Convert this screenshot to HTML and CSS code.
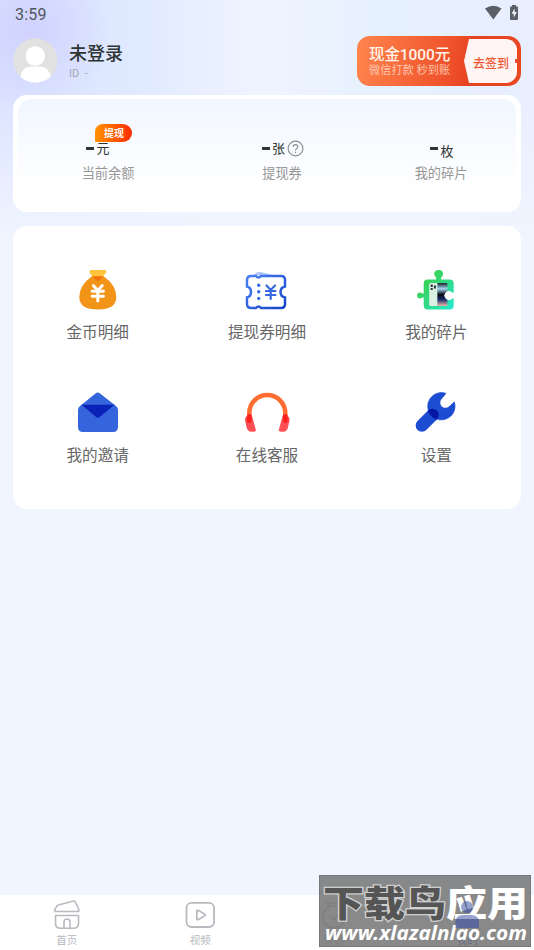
FILE: index.html
```html
<!DOCTYPE html>
<html lang="zh-CN">
<head>
<meta charset="utf-8">
<title>我的</title>
<link rel="stylesheet" href="styles.css">
</head>
<body>
<div class="screen">
  <div class="status">
    <span class="time">3:59</span>
    <svg class="status-icons" width="36" height="18" viewBox="484 4 36 18">
      <path d="M485 8.500Q493.300 2.800 501.500 8.500L493.300 19.500Z" fill="#5b5f66"/>
      <path d="M512 5h4v1.500h1.200q.8 0 .8.800V19q0 .9-.9.900h-6.200q-.9 0-.9-.9V7.300q0-.8.800-.8H512Z" fill="#5b5f66"/>
      <path d="M514.700 8.500l-3.200 5.200h2.200v3.800l3.200-5.600h-2.200Z" fill="#eef3ff"/>
    </svg>
  </div>
  <header class="header">
    <svg class="avatar" width="45" height="45" viewBox="0 0 45 45">
      <defs><clipPath id="round"><circle cx="22.500" cy="22.500" r="22.200"/></clipPath></defs>
      <g clip-path="url(#round)">
        <circle cx="22.500" cy="22.500" r="22.500" fill="#e1e1e1"/>
        <circle cx="22.300" cy="18" r="9.800" fill="#fff"/>
        <path d="M7 40Q8.500 28.500 18 28.500H27Q36 28.500 38.500 40V46H7Z" fill="#fff"/>
      </g>
    </svg>
    <div class="user">
      <div class="name">未登录</div>
      <div class="uid">ID&nbsp; -</div>
    </div>
    <div class="promo">
      <div class="promo-copy">
        <div class="promo-title">现金1000元</div>
        <div class="promo-sub">微信打款 秒到账</div>
      </div>
      <div class="promo-btn"><span>去签到</span></div>
    </div>
  </header>

  <section class="card balance">
    <div class="stat">
      <div class="value"><i class="dash"></i><span>元</span><b class="tag">提现</b></div>
      <div class="stat-label">当前余额</div>
    </div>
    <div class="stat">
      <div class="value"><i class="dash"></i><span>张</span>
        <svg class="help" width="17" height="17" viewBox="0 0 17 17" fill="none" stroke="#8b8b8b" stroke-width="1.100"><circle cx="8.500" cy="8.500" r="7.400"/><path d="M6.200 7Q6.200 4.600 8.500 4.600T10.800 6.800Q10.800 8 9.500 8.800Q8.500 9.400 8.500 10.500M8.500 11.700V13"/></svg>
      </div>
      <div class="stat-label">提现券</div>
    </div>
    <div class="stat">
      <div class="value low"><i class="dash"></i><span>枚</span></div>
      <div class="stat-label">我的碎片</div>
    </div>
  </section>

  <section class="card menu">
    <div class="item">
      <svg width="50" height="50" viewBox="72.700 265 50 50">
        <path d="M92 276Q79 285 79 297Q79 309.500 97.500 309.500T116 297Q116 285 103 276Z" fill="#f29418"/>
        <path d="M91 270H104.500Q107 270.500 105.500 273L102.500 276.500H92.500L89.500 273Q88 270.500 91 270Z" fill="#ffc43b"/>
        <path d="M92 276.300H103L98.700 280.500Q97.500 281.400 96.300 280.500Z" fill="#f4720c"/>
        <path d="M93 285.500L97.500 290.500L102 285.500M97.500 290.500V301M91.800 291.300H103.200M91.800 296.300H103.200" fill="none" stroke="#fff" stroke-width="2.900" stroke-linecap="round"/>
      </svg>
      <span>金币明细</span>
    </div>
    <div class="item">
      <svg width="50" height="50" viewBox="242 265 50 50">
        <defs><linearGradient id="ticket" x1="0" y1="0" x2="1" y2="1"><stop stop-color="#4a80f5"/><stop offset="1" stop-color="#1546c8"/></linearGradient></defs>
        <path d="M254 275Q257 271 261 272L277 276Z" fill="#afc5fa"/>
        <path d="M251.500 276H256Q258.500 279 261 276H281Q285 276 285 280V286.500Q280.500 287.500 280.500 292T285 297.500V304Q285 308 281 308H261Q258.500 305 256 308H251.500Q247 308 247 304V297.500Q251 296.500 251 292T247 286.500V280Q247 276 251.500 276Z" fill="#fff" stroke="url(#ticket)" stroke-width="2.500"/>
        <g fill="#3669e5"><circle cx="258.700" cy="285.200" r="1.700"/><circle cx="258.700" cy="291.800" r="1.700"/><circle cx="258.700" cy="298.400" r="1.700"/></g>
        <path d="M266.500 285.500L270.700 290L275 285.500M270.700 290V299M266 291H275.500M266 295H275.500" fill="none" stroke="#3868df" stroke-width="2.200" stroke-linecap="round"/>
      </svg>
      <span>提现券明细</span>
    </div>
    <div class="item">
      <svg width="50" height="50" viewBox="411.300 265 50 50">
        <defs><linearGradient id="puzzle" x1="0" y1="0" x2="1" y2="1"><stop offset=".3" stop-color="#36d35b"/><stop offset="1" stop-color="#25e8cf"/></linearGradient>
        <linearGradient id="phone" x1="0" y1="0" x2="0" y2="1"><stop stop-color="#18232c"/><stop offset=".25" stop-color="#a5d8f4"/><stop offset=".5" stop-color="#080b13"/><stop offset=".72" stop-color="#182b69"/><stop offset="1" stop-color="#f2b8aa"/></linearGradient></defs>
        <path d="M428 279.500H436.500V277.500Q434.500 276 434.500 273.800Q434.700 270 439 270T443.400 273.800Q443.400 276 441.500 277.500V279.500H450Q454 279.500 454 283.500V305Q454 309.500 450 309.500H428Q424 309.500 424 305V297.500H422.500Q421.500 298.600 420 298.600Q417.500 298.500 417.500 295.500T420 292.500Q421.500 292.500 422.500 293.500H424V283.500Q424 279.500 428 279.500Z" fill="url(#puzzle)"/>
        <rect x="429.500" y="283" width="8.500" height="23" rx="1.500" fill="#dcefe3"/>
        <path d="M431 284.500H433V287H431ZM434.200 285.500H436.200V288.500H434.200ZM431 288H433V290H431Z" fill="#233239"/>
        <rect x="437.700" y="283" width="10" height="23" rx="1" fill="url(#phone)"/>
        <path d="M454.500 292.500H452.500A4.300 4.300 0 0 0 445.300 293.500Q443.600 295.300 445.300 297.500A4.300 4.300 0 0 0 452.500 298.500H454.500Z" fill="#fff"/>
      </svg>
      <span>我的碎片</span>
    </div>
    <div class="item">
      <svg width="50" height="50" viewBox="73 387 50 50">
        <path d="M80 406L95.500 393.500Q97.700 391.500 100 393.500L116 406Q118 407.500 118 410V427Q118 432 113 432H83Q78 432 78 427V410Q78 407.500 80 406Z" fill="#3565dd"/>
        <path d="M81.500 404.800H114.500L100 416.800Q97.900 418.500 95.800 416.800Z" fill="#0b22b9"/>
      </svg>
      <span>我的邀请</span>
    </div>
    <div class="item">
      <svg width="50" height="50" viewBox="242 387 50 50">
        <path d="M249.300 421V413A18 18 0 0 1 285.300 413V421" fill="none" stroke="#ff6e30" stroke-width="4.600" stroke-linecap="round"/>
        <path d="M247 415.500Q250.500 412 252 416L256 430.500Q255.500 431.800 251.500 431.800Q247.500 431.800 246.500 427L245.200 421Q244.500 418 247 415.500ZM287.600 415.500Q284.100 412 282.600 416L278.600 430.500Q279.100 431.800 283.100 431.800Q287.100 431.800 288.100 427L289.400 421Q290.100 418 287.600 415.500Z" fill="#ff4f54"/>
        <path d="M247 415.500Q250 412.500 251.600 415.500V421Q251 423 249 423T247 421ZM287.600 415.500Q284.600 412.500 283 415.500V421Q283.500 423 285.500 423T287.600 421Z" fill="#ff201b"/>
      </svg>
      <span>在线客服</span>
    </div>
    <div class="item">
      <svg width="50" height="50" viewBox="411.600 386.500 50 50">
        <defs><clipPath id="head"><circle cx="441.800" cy="406" r="13.800"/></clipPath></defs>
        <path d="M446.500 392.900A13.600 13.600 0 1 0 454.900 401.500L450 406A5.400 5.400 0 0 1 442 398.300Z" fill="#1c4cd2" stroke="#1c4cd2" stroke-width=".8" stroke-linejoin="round"/>
        <path d="M433 414.500L422.500 425" stroke="#1c4cd2" stroke-width="12.500" stroke-linecap="round"/>
        <path d="M433 414.500L422.500 425" stroke="#0617a3" stroke-width="12.500" stroke-linecap="round" clip-path="url(#head)"/>
      </svg>
      <span>设置</span>
    </div>
  </section>

  <nav class="tabs">
    <div class="tab">
      <svg width="34" height="34" viewBox="50 898 34 34" fill="none" stroke="#b9b9c0" stroke-width="1.600" stroke-linejoin="round">
        <path d="M58.500 905L73.500 901Q74.800 900.700 75.300 902L78.800 909.500Q79.500 911.500 77.500 911.500H56Q54 911.500 54.800 909.500L57 906Q57.500 905.200 58.500 905ZM55.500 915.500H78.500V923.500Q78.500 928.200 73.500 928.200H60.500Q55.500 928.200 55.500 923.500ZM64 928V922Q64 919 67 919T70 922V928"/>
      </svg>
      <span>首页</span>
    </div>
    <div class="tab">
      <svg width="34" height="34" viewBox="183.500 898 34 34" fill="none" stroke="#b9b9c0" stroke-width="1.800" stroke-linejoin="round">
        <rect x="187" y="902.800" width="27.500" height="24.200" rx="5"/>
        <path d="M197.300 911.500Q197.300 909.800 199 910.500L205 914Q206.500 915 205 916L199 919.500Q197.300 920.200 197.300 918.500Z"/>
      </svg>
      <span>视频</span>
    </div>
    <div class="tab">
      <svg width="34" height="34" viewBox="317 898 34 34" fill="none" stroke="#b9b9c0" stroke-width="1.700"><circle cx="334" cy="917" r="11"/><path d="M329 906L327 903H341L339 906M330 916L334 920L339 914"/></svg>
      <span>赚钱</span>
    </div>
    <div class="tab active">
      <svg width="34" height="34" viewBox="450 898 34 34" fill="#1d46cf"><circle cx="467" cy="907" r="6"/><path d="M455.500 928V922Q456 915 463 915H471Q478.500 915 479 922V928Z"/></svg>
      <span>我的</span>
    </div>
  </nav>

  <div class="watermark">
    <svg width="212" height="72" viewBox="319 875 212 72">
      <g class="wm-title">
        <text class="wm-dark" x="323" y="917" textLength="123" lengthAdjust="spacingAndGlyphs">下载鸟</text>
        <text class="wm-light" x="446" y="917" textLength="82" lengthAdjust="spacingAndGlyphs">应用</text>
      </g>
      <text class="wm-url" x="325" y="939.500" textLength="202" lengthAdjust="spacingAndGlyphs">www.xlazalnlao.com</text>
      <g class="wm-tint">
        <circle cx="467" cy="907" r="6"/><path d="M455.500 928V922Q456 915 463 915H471Q478.500 915 479 922V928Z"/>
      </g>
    </svg>
  </div>
</div>
</body>
</html>
```
FILE: styles.css
```css
* { box-sizing: border-box; }
body {
  margin: 0;
  font-family: Roboto, "Noto Sans CJK SC", sans-serif;
  color: #2d3432;
}
.screen {
  position: relative;
  display: flex;
  flex-direction: column;
  width: 534px;
  height: 950px;
  overflow: hidden;
  background:
    radial-gradient(ellipse 80px 85px at 30px 30px, rgba(208, 209, 255, .9) 0%, rgba(208, 210, 255, .5) 50%, rgba(208, 210, 255, 0) 100%),
    linear-gradient(180deg, rgba(241, 245, 255, 0) 90px, #f1f5ff 240px),
    linear-gradient(90deg, #dae2ff 0, #dfe9ff 130px, #eff4ff 260px, #e6f1fe 380px, #e8eefe 534px);
}
.status {
  display: flex;
  justify-content: space-between;
  align-items: center;
  height: 28px;
  padding: 0 14px 2px 15px;
}
.time { font-size: 16px; line-height: 20px; color: #50545f; letter-spacing: .2px; padding-top: 3px; }
.header {
  display: flex;
  height: 67px;
  padding: 8px 13px 0;
}
.avatar { margin-top: 2px; flex: none; }
.user { flex: 1; margin-left: 11px; }
.name { font-size: 18px; font-weight: 500; line-height: 24px; margin-top: 6px; }
.uid { font-size: 11px; line-height: 13px; color: #a3a7b1; margin-top: 1px; }
.promo {
  display: flex;
  width: 164px;
  height: 50px;
  padding: 3px 4px 4px 12px;
  border-radius: 13px;
  background: linear-gradient(100deg, #ff854d, #ee5029 58%, #e5421f 70%, #ea4723);
}
.promo-copy { width: 95px; white-space: nowrap; }
.promo-title { font-size: 15.500px; font-weight: 500; line-height: 20px; margin-top: 6px; color: #fff3ea; letter-spacing: -.1px; }
.promo-sub { font-size: 11.200px; line-height: 14px; margin-top: -1px; color: #ffc5ad; }
.promo-btn {
  width: 53px;
  height: 44px;
  padding: 17px 0 0 9px;
  color: #ed5833;
  font-size: 12px;
  font-weight: 500;
  line-height: 16px;
  white-space: nowrap;
  background: radial-gradient(circle at 53px 22px, #ea4723 2px, #fff5f4 2.500px);
  border-radius: 0 11px 11px 0;
  clip-path: polygon(5px 0, 100% 0, 100% 100%, 5px 100%, 0 50%);
}
.card { margin: 0 13px; background: #fff; border-radius: 14px; flex: none; }
.balance {
  position: relative;
  display: grid;
  grid-template-columns: 190px 158px 160px;
  height: 117px;
  padding-top: 41px;
  isolation: isolate;
}
.balance::before {
  content: "";
  position: absolute;
  z-index: -1;
  inset: 4px 5px;
  border-radius: 14px;
  background: linear-gradient(180deg, #f1f6ff, #fff 82%);
}
.stat { display: flex; flex-direction: column; align-items: center; }
.value { position: relative; display: flex; align-items: center; left: 1px; height: 26px; font-size: 13px; line-height: 20px; }
.value span { margin-left: 2px; }
.value.low span { padding-top: 5px; }
.dash { width: 8px; height: 3px; margin-top: -1px; background: #2d3432; }
.stat:first-child .value { left: -10px; }
.help { margin: -2px 0 0 2px; }
.tag {
  position: absolute;
  left: 9px;
  top: -12px;
  width: 37px;
  height: 18px;
  border-radius: 8px 9px 9px 1px;
  background: linear-gradient(90deg, #ff9200, #ff2b00);
  color: #fff;
  font-size: 10px;
  line-height: 19px;
  font-weight: 700;
  text-align: center;
}
.stat-label { font-size: 13.200px; line-height: 20px; margin-top: 2px; color: #979797; }
.menu {
  display: grid;
  grid-template-columns: repeat(3, 1fr);
  grid-auto-rows: 122px;
  height: 283px;
  margin-top: 14px;
  padding-top: 39px;
}
.item { display: flex; flex-direction: column; align-items: center; }
.item svg { display: block; flex: none; }
.item span { font-size: 15.600px; line-height: 24px; margin-top: 6px; color: #666; }
.item:nth-child(n+4) span { margin-top: 7px; }
.tabs { display: grid; grid-template-columns: repeat(4, 1fr); height: 55px; margin-top: auto; background: #fff; }
.tab { display: flex; flex-direction: column; align-items: center; padding-top: 3px; font-size: 10.500px; line-height: 15px; color: #b9b9c0; }
.tab svg { flex: none; }
.tab span { margin-top: 1px; }
.tab.active { color: #1d46cf; }
.watermark {
  position: absolute;
  left: 319px;
  top: 875px;
  width: 212px;
  height: 72px;
  background: rgba(118, 118, 118, .86);
  border: 1px solid #777;
}
.watermark svg { display: block; margin: -1px; }
.wm-title { font: 900 36px "Noto Sans CJK SC", sans-serif; }
.wm-dark { fill: #555; stroke: #d0d0d0; stroke-width: 2.500px; paint-order: stroke; }
.wm-light { fill: #fff; }
.wm-url { font: italic 700 20px "Noto Sans", "Open Sans", sans-serif; fill: #fff; }
.wm-tint { fill: #5265ac; opacity: .6; }
```
